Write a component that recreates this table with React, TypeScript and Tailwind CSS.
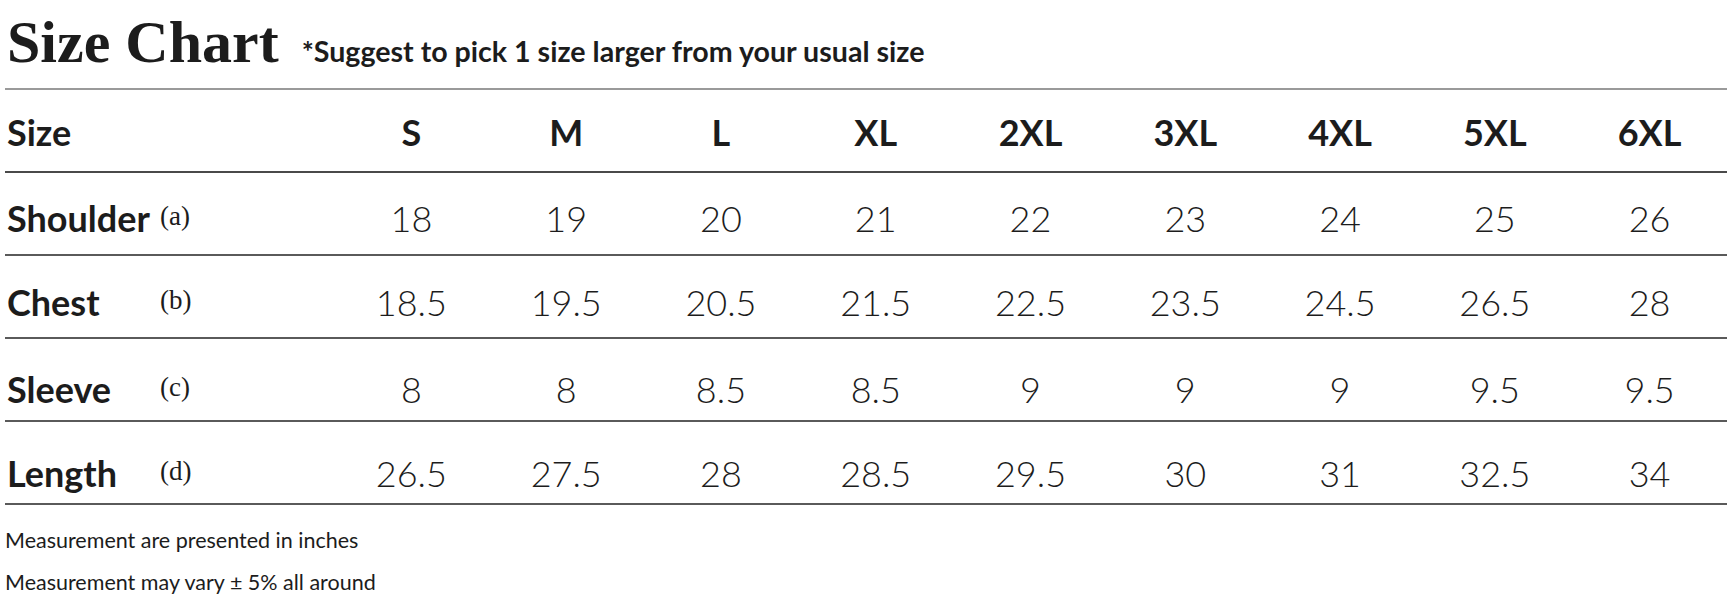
import React from 'react'

interface Measure {
  name: string
  tag: string
  values: string[]
  pad: string
}

const SIZES = ['S', 'M', 'L', 'XL', '2XL', '3XL', '4XL', '5XL', '6XL']

// row offsets follow the original artwork, which isn't evenly centered
const MEASURES: Measure[] = [
  { name: 'Shoulder', tag: '(a)', pad: 'pt-[8px]', values: ['18', '19', '20', '21', '22', '23', '24', '25', '26'] },
  { name: 'Chest', tag: '(b)', pad: 'pt-[11px]', values: ['18.5', '19.5', '20.5', '21.5', '22.5', '23.5', '24.5', '26.5', '28'] },
  { name: 'Sleeve', tag: '(c)', pad: 'pt-[18px]', values: ['8', '8', '8.5', '8.5', '9', '9', '9', '9.5', '9.5'] },
  { name: 'Length', tag: '(d)', pad: 'pt-[20px]', values: ['26.5', '27.5', '28', '28.5', '29.5', '30', '31', '32.5', '34'] },
]

const lato = "font-['Lato','Noto_Sans',sans-serif]"

export default function App() {
  return (
    <div className={`w-[1734px] h-[614px] bg-white text-[#1c1c1c] pl-[5px] pr-[7px] ${lato}`}>
      {/* Title */}
      <div className="flex items-baseline h-[90px] pt-[6px] border-b-2 border-[#9a9a9a]">
        <h1 className="font-['Liberation_Serif','Times_New_Roman',serif] font-bold text-[60px] leading-[72px] pl-[2px]">
          Size Chart
        </h1>
        <p className="font-bold text-[28.6px] ml-[23px]">*Suggest to pick 1 size larger from your usual size</p>
      </div>

      {/* Table */}
      <div className="grid grid-cols-[329px_repeat(9,1fr)]">
        <div className="contents">
          <div className="h-[83px] pt-[2px] flex items-center pl-[2px] border-b-2 border-[#4a4a4a] font-bold text-[36px]">
            Size
          </div>
          {SIZES.map((s) => (
            <div
              key={s}
              className="h-[83px] pt-[2px] flex items-center justify-center border-b-2 border-[#4a4a4a] font-bold text-[36px]"
            >
              {s}
            </div>
          ))}
        </div>

        {MEASURES.map((m) => (
          <div key={m.name} className="contents">
            <div className={`h-[83px] ${m.pad} flex items-center pl-[2px] border-b-2 border-[#5a5a5a]`}>
              <span className="w-[153px] font-bold text-[36px]">{m.name}</span>
              <span className="font-['Liberation_Serif','Times_New_Roman',serif] text-[27px] -mt-[3px]">{m.tag}</span>
            </div>
            {m.values.map((v, i) => (
              <div
                key={i}
                className={`h-[83px] ${m.pad} flex items-center justify-center border-b-2 border-[#5a5a5a] font-light text-[36px]`}
              >
                {v}
              </div>
            ))}
          </div>
        ))}
      </div>

      {/* Notes */}
      <div className="pt-[14px] text-[21.5px] leading-[42px]">
        <p>Measurement are presented in inches</p>
        <p>Measurement may vary ± 5% all around</p>
      </div>
    </div>
  )
}
